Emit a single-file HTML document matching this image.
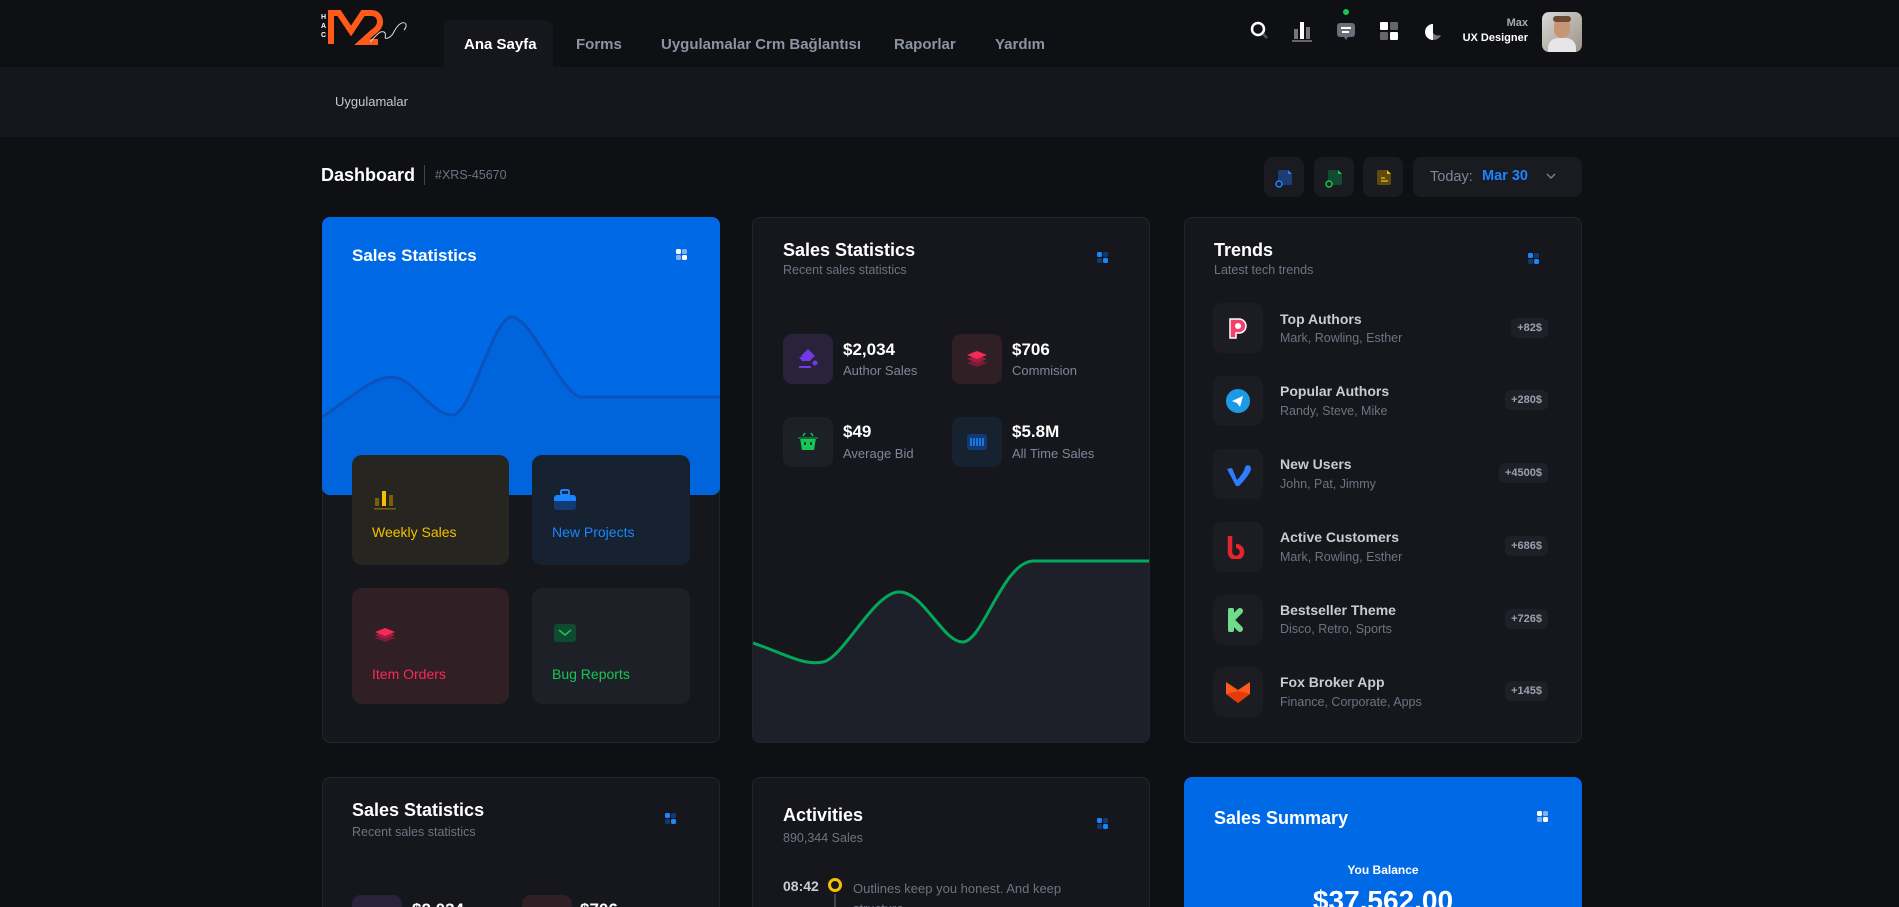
<!DOCTYPE html>
<html><head><meta charset="utf-8"><style>
*{margin:0;padding:0;box-sizing:border-box}
html{width:1899px;height:907px;overflow:hidden}
body{width:1899px;height:907px;overflow:hidden;background:#0f1014;font-family:"Liberation Sans",sans-serif;position:relative;color:#fff}
.a{position:absolute}
.hdr{left:0;top:0;width:1899px;height:67px;background:#0f1014}
.sub{left:0;top:67px;width:1899px;height:70px;background:#16171c}
.tab{font-size:15px;font-weight:bold;color:#8d93a3;top:36px}
.card{background:#16171c;border:1px solid #23252c;border-radius:8px}
.t{font-weight:bold;font-size:18px;color:#fff}
.s{font-size:12.5px;color:#6e7383}
.dots{width:12px;height:12px}
.dots i{position:absolute;width:5px;height:5px;border-radius:1.5px}
.tile{border-radius:10px}
.ib{width:50px;height:50px;border-radius:9px}
.v{font-size:17px;font-weight:bold;color:#fff}
.l{font-size:13px;color:#80869a}
.tr .n{font-size:14px;font-weight:bold;color:#c8ccd6}
.badge{background:#1e2027;border-radius:6px;height:20px;font-size:11px;font-weight:bold;color:#9aa0ad;line-height:20px;padding:0 6px}
.btn{width:40px;height:40px;background:#1a1b21;border-radius:8px}
</style></head><body>
<div class="a hdr"></div>
<div class="a sub"></div>
<div class="a" style="left:321px;top:13px;font-size:7px;font-weight:bold;line-height:9px;color:#fff;width:6px">H<br>A<br>C</div>
<svg class="a" style="left:328px;top:10px" width="90" height="36" viewBox="0 0 90 36"><path d="M3 34V3h8l12 18L35 3h8c6 0 9 4 9 9 0 5-4 8-8 11l-10 9h16" fill="none" stroke="#ff5a1a" stroke-width="6"/><path d="M42 32c6-6 10-12 14-10s-2 8 4 6 6-10 12-14 8 2 4 6" fill="none" stroke="#ddd" stroke-width="1"/></svg>
<div class="a" style="left:444px;top:20px;width:109px;height:47px;background:#16171c;border-radius:8px 8px 0 0"></div>
<div class="a tab" style="left:464px;color:#fff">Ana Sayfa</div>
<div class="a tab" style="left:576px">Forms</div>
<div class="a tab" style="left:661px">Uygulamalar Crm Bağlantısı</div>
<div class="a tab" style="left:894px">Raporlar</div>
<div class="a tab" style="left:995px">Yardım</div>
<div class="a" style="left:335px;top:94px;font-size:13px;color:#c3c7d1">Uygulamalar</div>
<svg class="a" style="left:1249px;top:20px" width="20" height="20"><circle cx="9" cy="9" r="6" fill="none" stroke="#fff" stroke-width="2.5"/><path d="M14 14l4 4" stroke="#555" stroke-width="2.5"/></svg>
<svg class="a" style="left:1292px;top:20px" width="20" height="22"><rect x="2" y="9" width="4" height="10" fill="#777"/><rect x="8" y="2" width="4" height="17" fill="#fff"/><rect x="14" y="7" width="4" height="12" fill="#777"/><rect x="0" y="20" width="20" height="2" fill="#666"/></svg>
<div class="a" style="left:1343px;top:9px;width:6px;height:6px;border-radius:50%;background:#17c653"></div>
<svg class="a" style="left:1336px;top:22px" width="20" height="20"><rect x="1" y="1" width="18" height="14" rx="3" fill="#6b6e78"/><path d="M5 6h10M6 10h7" stroke="#fff" stroke-width="2"/><path d="M8 15l2 3 2-3z" fill="#6b6e78"/></svg>
<svg class="a" style="left:1380px;top:22px" width="20" height="20"><rect x="0" y="0" width="8" height="8" rx="1" fill="#fff"/><rect x="10" y="0" width="8" height="8" rx="1" fill="#666"/><rect x="0" y="10" width="8" height="8" rx="1" fill="#666"/><rect x="10" y="10" width="8" height="8" rx="1" fill="#fff"/></svg>
<svg class="a" style="left:1424px;top:22px" width="20" height="20"><path d="M9 2a8 8 0 1 0 8 11A7 7 0 0 1 9 2z" fill="#777"/><path d="M9 2a8 8 0 0 0 0 16V2z" fill="#fff"/></svg>
<div class="a" style="left:1440px;top:17px;width:88px;text-align:right;font-size:11px;font-weight:bold;color:#aaa">Max</div>
<div class="a" style="left:1420px;top:32px;width:108px;text-align:right;font-size:11px;font-weight:bold;color:#fff">UX Designer</div>
<div class="a" style="left:1542px;top:12px;width:40px;height:40px;border-radius:7px;background:linear-gradient(135deg,#d9d9d6,#9a9288);overflow:hidden"><div class="a" style="left:12px;top:6px;width:16px;height:20px;border-radius:8px;background:#c79574"></div><div class="a" style="left:6px;top:26px;width:28px;height:18px;border-radius:10px 10px 0 0;background:#e6e6e6"></div><div class="a" style="left:11px;top:4px;width:18px;height:6px;border-radius:4px;background:#6b4c35"></div></div>
<div class="a" style="left:321px;top:165px;font-size:18px;font-weight:bold;color:#fff">Dashboard</div>
<div class="a" style="left:424px;top:165px;width:1px;height:20px;background:#444"></div>
<div class="a" style="left:435px;top:168px;font-size:12.5px;color:#6e7383">#XRS-45670</div>
<div class="a btn" style="left:1264px;top:157px"><svg width="40" height="40"><path d="M15 13h9l4 4v9a2 2 0 0 1-2 2H16a2 2 0 0 1-2-2V15a2 2 0 0 1 1-2z" fill="#1c3c72"/><path d="M24 13l4 4h-4z" fill="#1b84ff"/><circle cx="15" cy="27" r="3" fill="#1a1b21" stroke="#1b84ff" stroke-width="1.5"/></svg></div>
<div class="a btn" style="left:1314px;top:157px"><svg width="40" height="40"><path d="M15 13h9l4 4v9a2 2 0 0 1-2 2H16a2 2 0 0 1-2-2V15a2 2 0 0 1 1-2z" fill="#124b32"/><path d="M24 13l4 4h-4z" fill="#17c653"/><circle cx="15" cy="27" r="3" fill="#1a1b21" stroke="#17c653" stroke-width="1.5"/></svg></div>
<div class="a btn" style="left:1363px;top:157px"><svg width="40" height="40"><path d="M15 13h9l4 4v9a2 2 0 0 1-2 2H16a2 2 0 0 1-2-2V15a2 2 0 0 1 1-2z" fill="#5d4a12"/><path d="M24 13l4 4h-4z" fill="#f6c000"/><path d="M18 21h4M18 24h7" stroke="#f6c000" stroke-width="1.3"/></svg></div>
<div class="a" style="left:1413px;top:157px;width:169px;height:40px;background:#1a1b21;border-radius:8px"></div>
<div class="a" style="left:1430px;top:169px;font-size:14.5px;color:#80869a">Today:</div>
<div class="a" style="left:1482px;top:168px;font-size:14.5px;font-weight:bold;color:#1b84ff">Mar 30</div>
<svg class="a" style="left:1546px;top:172px" width="10" height="8"><path d="M1 2l4 4 4-4" fill="none" stroke="#80869a" stroke-width="1.3"/></svg>

<div class="a card" style="left:322px;top:217px;width:398px;height:526px"></div>
<div class="a" style="left:322px;top:217px;width:398px;height:278px;background:#006ae6;border-radius:8px;overflow:hidden">
<svg width="398" height="278"><path d="M0 200C30 180 50 160 70 160S110 198 130 198S170 100 190 100S240 180 260 180H398V278H0z" fill="#0064dc"/><path d="M0 200C30 180 50 160 70 160S110 198 130 198S170 100 190 100S240 180 260 180H398" fill="none" stroke="#0d52bc" stroke-width="3"/></svg></div>
<div class="a t" style="left:352px;top:246px;font-size:17px">Sales Statistics</div>
<div class="a dots" style="left:676px;top:249px"><i style="left:0;top:0;background:#fff"></i><i style="left:6px;top:0;background:#7fb3f5"></i><i style="left:0;top:6px;background:#7fb3f5"></i><i style="left:6px;top:6px;background:#fff"></i></div>
<div class="a tile" style="left:352px;top:455px;width:157px;height:110px;background:#26251f"></div>
<svg class="a" style="left:373px;top:488px" width="24" height="22"><rect x="2" y="10" width="4" height="8" fill="#7a5e0a"/><rect x="9" y="3" width="4" height="15" fill="#f6c000"/><rect x="16" y="7" width="4" height="11" fill="#7a5e0a"/><rect x="1" y="20" width="22" height="1.5" fill="#7a5e0a"/></svg>
<div class="a" style="left:372px;top:524px;font-size:14px;color:#f6c000">Weekly Sales</div>
<div class="a tile" style="left:532px;top:455px;width:158px;height:110px;background:#172231"></div>
<svg class="a" style="left:553px;top:489px" width="24" height="22"><rect x="1" y="6" width="22" height="15" rx="3" fill="#133a72"/><path d="M1 9a3 3 0 0 1 3-3h16a3 3 0 0 1 3 3v3H1z" fill="#1b84ff"/><rect x="8" y="1" width="8" height="5" rx="1.5" fill="none" stroke="#1b84ff" stroke-width="2"/></svg>
<div class="a" style="left:552px;top:524px;font-size:14px;color:#1b84ff">New Projects</div>
<div class="a tile" style="left:352px;top:588px;width:157px;height:116px;background:#302025"></div>
<svg class="a" style="left:373px;top:622px" width="24" height="22"><path d="M12 14l10-4-10-4-10 4z" fill="#7a1c33" transform="translate(0 6)"/><path d="M12 14l10-4-10-4-10 4z" fill="#9b2040" transform="translate(0 3)"/><path d="M12 14l10-4-10-4-10 4z" fill="#f8285a"/></svg>
<div class="a" style="left:372px;top:666px;font-size:14px;color:#f8285a">Item Orders</div>
<div class="a tile" style="left:532px;top:588px;width:158px;height:116px;background:#1e2028"></div>
<svg class="a" style="left:553px;top:623px" width="24" height="20"><rect x="1" y="1" width="22" height="18" rx="3" fill="#0f4a30"/><path d="M6 7l6 5 6-5" fill="none" stroke="#17c653" stroke-width="1.6"/></svg>
<div class="a" style="left:552px;top:666px;font-size:14px;color:#17c653">Bug Reports</div>

<div class="a card" style="left:752px;top:217px;width:398px;height:526px;overflow:hidden">
<svg class="a" style="left:0;top:0" width="398" height="526"><path d="M0 425C30 435 50 448 70 444S120 376 145 374 190 425 210 424 250 344 280 343H398V526H0z" fill="#1e2029"/><path d="M0 425C30 435 50 448 70 444S120 376 145 374 190 425 210 424 250 344 280 343H398" fill="none" stroke="#03a85a" stroke-width="3"/></svg></div>
<div class="a t" style="left:783px;top:240px">Sales Statistics</div>
<div class="a s" style="left:783px;top:263px">Recent sales statistics</div>
<div class="a dots" style="left:1097px;top:252px"><i style="left:0;top:0;background:#1b84ff"></i><i style="left:6px;top:0;background:#123a6e"></i><i style="left:0;top:6px;background:#123a6e"></i><i style="left:6px;top:6px;background:#1b84ff"></i></div>
<div class="a ib" style="left:783px;top:334px;background:#28233a"></div>
<svg class="a" style="left:796px;top:347px" width="24" height="24"><path d="M5 9l7-7 7 7-7 5z" fill="#7239ea"/><path d="M3 10h14l-3 4H6z" fill="#7239ea"/><circle cx="19" cy="16" r="2.5" fill="#7239ea"/><rect x="3" y="19" width="12" height="2" fill="#7239ea"/></svg>
<div class="a v" style="left:843px;top:340px">$2,034</div><div class="a l" style="left:843px;top:363px">Author Sales</div>
<div class="a ib" style="left:952px;top:334px;background:#302025"></div>
<svg class="a" style="left:965px;top:347px" width="24" height="24"><path d="M12 20l10-4-10-4-10 4z" fill="#7a1c33"/><path d="M12 16l10-4-10-4-10 4z" fill="#9b2040"/><path d="M12 12l10-4-10-4-10 4z" fill="#f8285a"/></svg>
<div class="a v" style="left:1012px;top:340px">$706</div><div class="a l" style="left:1012px;top:363px">Commision</div>
<div class="a ib" style="left:783px;top:417px;background:#1e2028"></div>
<svg class="a" style="left:796px;top:430px" width="24" height="24"><path d="M4 8h16l-2 12H6z" fill="#17c653"/><path d="M2 8h20" stroke="#0f6b3a" stroke-width="2"/><path d="M7 6l2-3M17 6l-2-3" stroke="#17c653" stroke-width="1.5"/><path d="M9 12v3M15 12v3" stroke="#1e2028" stroke-width="1.6"/></svg>
<div class="a v" style="left:843px;top:422px">$49</div><div class="a l" style="left:843px;top:446px">Average Bid</div>
<div class="a ib" style="left:952px;top:417px;background:#172231"></div>
<svg class="a" style="left:965px;top:430px" width="24" height="24"><rect x="2" y="4" width="20" height="16" rx="3" fill="#123a6e"/><path d="M6 8v8M9 8v8M12 8v8M15 8v8M18 8v8" stroke="#1b84ff" stroke-width="1.6"/></svg>
<div class="a v" style="left:1012px;top:422px">$5.8M</div><div class="a l" style="left:1012px;top:446px">All Time Sales</div>

<div class="a card" style="left:1184px;top:217px;width:398px;height:526px"></div>
<div class="a t" style="left:1214px;top:240px">Trends</div>
<div class="a s" style="left:1214px;top:263px">Latest tech trends</div>
<div class="a dots" style="left:1528px;top:253px"><i style="left:0;top:0;background:#1b84ff"></i><i style="left:6px;top:0;background:#123a6e"></i><i style="left:0;top:6px;background:#123a6e"></i><i style="left:6px;top:6px;background:#1b84ff"></i></div>
<div class="tr">
<div class="a ib" style="left:1213px;top:303px;background:#1c1d23"></div>
<svg class="a" style="left:1226px;top:316px" width="24" height="24"><path d="M4 3h9a7 7 0 0 1 0 14h-3v5H4z" fill="#f1416c" stroke="#fff" stroke-width="1.5"/><circle cx="12" cy="10" r="3" fill="#fff"/></svg>
<div class="a n" style="left:1280px;top:311px">Top Authors</div><div class="a s" style="left:1280px;top:331px">Mark, Rowling, Esther</div><div class="a badge" style="right:351px;top:318px">+82$</div>
<div class="a ib" style="left:1213px;top:376px;background:#1c1d23"></div>
<svg class="a" style="left:1226px;top:389px" width="24" height="24"><circle cx="12" cy="12" r="12" fill="#1c9ae6"/><path d="M6 12l11-5-3 11-3-4z" fill="#fff"/></svg>
<div class="a n" style="left:1280px;top:383px">Popular Authors</div><div class="a s" style="left:1280px;top:404px">Randy, Steve, Mike</div><div class="a badge" style="right:351px;top:390px">+280$</div>
<div class="a ib" style="left:1213px;top:449px;background:#1c1d23"></div>
<svg class="a" style="left:1226px;top:462px" width="26" height="24"><path d="M1 7l5-1 5 12c4-4 8-10 8-13 2-3 6-2 6 2-1 5-8 13-12 17h-3z" fill="#2b7fff"/></svg>
<div class="a n" style="left:1280px;top:456px">New Users</div><div class="a s" style="left:1280px;top:477px">John, Pat, Jimmy</div><div class="a badge" style="right:351px;top:463px">+4500$</div>
<div class="a ib" style="left:1213px;top:522px;background:#1c1d23"></div>
<svg class="a" style="left:1226px;top:535px" width="24" height="24"><path d="M4 1v16a6 6 0 1 0 6-6" fill="none" stroke="#e4262c" stroke-width="4.5"/></svg>
<div class="a n" style="left:1280px;top:529px">Active Customers</div><div class="a s" style="left:1280px;top:550px">Mark, Rowling, Esther</div><div class="a badge" style="right:351px;top:536px">+686$</div>
<div class="a ib" style="left:1213px;top:595px;background:#1c1d23"></div>
<svg class="a" style="left:1226px;top:608px" width="24" height="24"><path d="M5 2v20M5 12l9-9M5 12l9 9" fill="none" stroke="#6fdc8c" stroke-width="6" stroke-linecap="round"/></svg>
<div class="a n" style="left:1280px;top:602px">Bestseller Theme</div><div class="a s" style="left:1280px;top:622px">Disco, Retro, Sports</div><div class="a badge" style="right:351px;top:609px">+726$</div>
<div class="a ib" style="left:1213px;top:667px;background:#1c1d23"></div>
<svg class="a" style="left:1225px;top:680px" width="26" height="24"><path d="M1 2l12 8 12-8v12l-12 9-12-9z" fill="#ff5a1a"/><path d="M1 14l12 9 12-9-12-3z" fill="#e23b0c"/></svg>
<div class="a n" style="left:1280px;top:674px">Fox Broker App</div><div class="a s" style="left:1280px;top:695px">Finance, Corporate, Apps</div><div class="a badge" style="right:351px;top:681px">+145$</div>
</div>

<div class="a card" style="left:322px;top:777px;width:398px;height:140px"></div>
<div class="a t" style="left:352px;top:800px">Sales Statistics</div>
<div class="a s" style="left:352px;top:825px">Recent sales statistics</div>
<div class="a dots" style="left:665px;top:813px"><i style="left:0;top:0;background:#1b84ff"></i><i style="left:6px;top:0;background:#123a6e"></i><i style="left:0;top:6px;background:#123a6e"></i><i style="left:6px;top:6px;background:#1b84ff"></i></div>
<div class="a ib" style="left:352px;top:895px;background:#28233a"></div>
<div class="a v" style="left:412px;top:900px">$2,034</div>
<div class="a ib" style="left:522px;top:895px;background:#302025"></div>
<div class="a v" style="left:580px;top:900px">$706</div>

<div class="a card" style="left:752px;top:777px;width:398px;height:140px"></div>
<div class="a t" style="left:783px;top:805px">Activities</div>
<div class="a s" style="left:783px;top:831px">890,344 Sales</div>
<div class="a dots" style="left:1097px;top:818px"><i style="left:0;top:0;background:#1b84ff"></i><i style="left:6px;top:0;background:#123a6e"></i><i style="left:0;top:6px;background:#123a6e"></i><i style="left:6px;top:6px;background:#1b84ff"></i></div>
<div class="a" style="left:783px;top:878px;font-size:14px;font-weight:bold;color:#c8ccd6">08:42</div>
<div class="a" style="left:828px;top:878px;width:14px;height:14px;border-radius:50%;border:3px solid #f6c000"></div>
<div class="a" style="left:834px;top:894px;width:2px;height:20px;background:#444"></div>
<div class="a" style="left:853px;top:879px;font-size:13px;color:#6e7383;line-height:20px;width:260px">Outlines keep you honest. And keep structure</div>

<div class="a" style="left:1184px;top:777px;width:398px;height:140px;background:#006ae6;border-radius:8px"></div>
<div class="a t" style="left:1214px;top:808px">Sales Summary</div>
<div class="a dots" style="left:1537px;top:811px"><i style="left:0;top:0;background:#fff"></i><i style="left:6px;top:0;background:#7fb3f5"></i><i style="left:0;top:6px;background:#7fb3f5"></i><i style="left:6px;top:6px;background:#fff"></i></div>
<div class="a" style="left:1184px;top:863px;width:398px;text-align:center;font-size:12px;font-weight:bold;color:#fff">You Balance</div>
<div class="a" style="left:1184px;top:885px;width:398px;text-align:center;font-size:28px;font-weight:bold;color:#fff">$37,562.00</div>
</body></html>
